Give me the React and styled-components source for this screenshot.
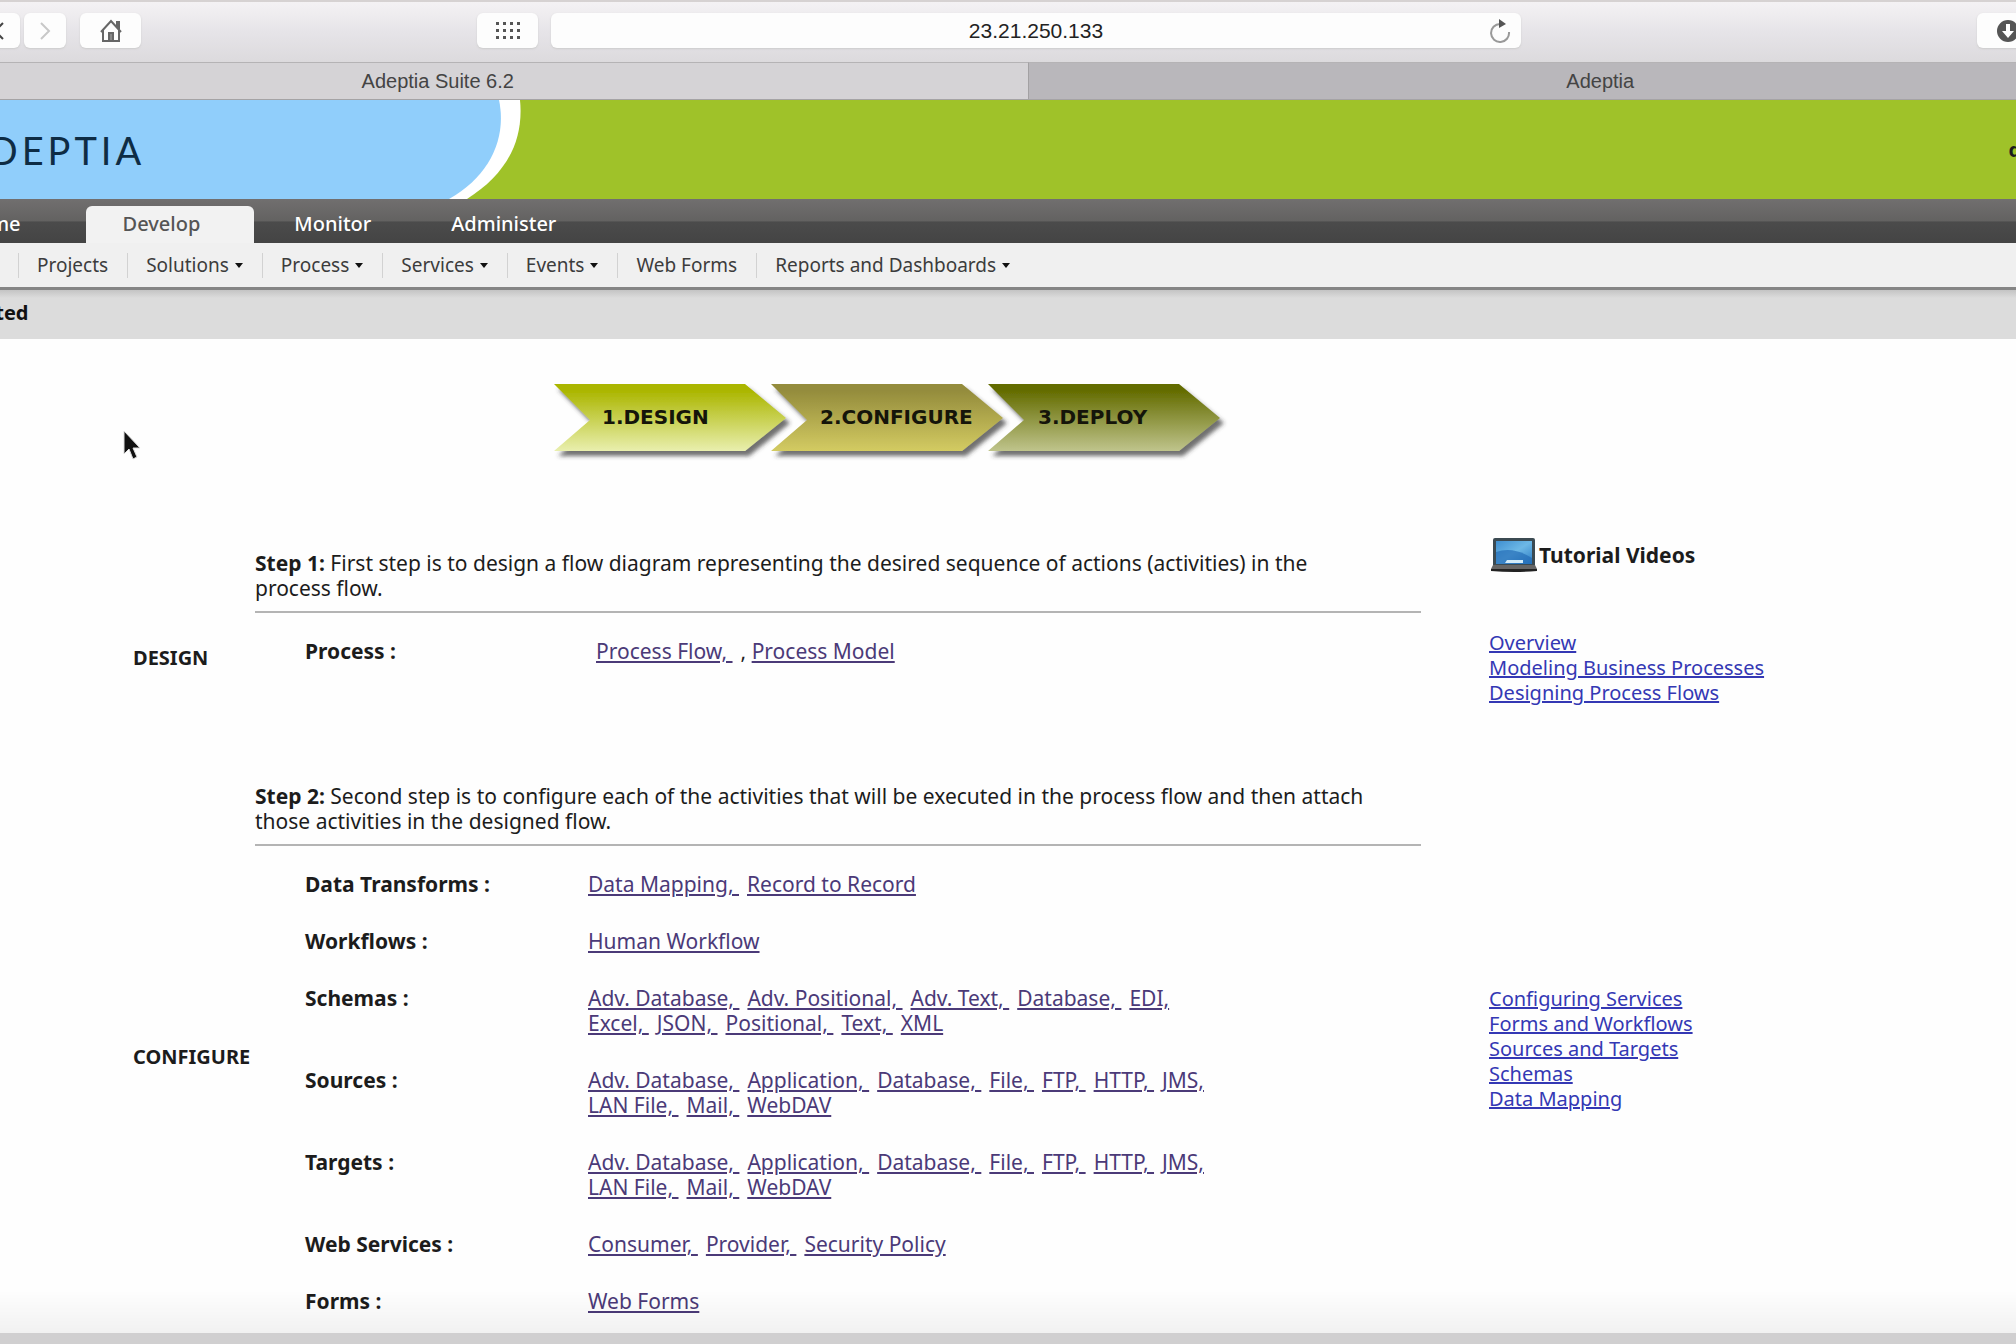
import React from "react";
import styled, { createGlobalStyle, css } from "styled-components";

const navItems = ["Home", "Develop", "Monitor", "Administer"];

const subNavItems = [
  { label: "Projects" },
  { label: "Solutions", menu: true },
  { label: "Process", menu: true },
  { label: "Services", menu: true },
  { label: "Events", menu: true },
  { label: "Web Forms" },
  { label: "Reports and Dashboards", menu: true },
];

const endpoints = [
  "Adv. Database",
  "Application",
  "Database",
  "File",
  "FTP",
  "HTTP",
  "JMS",
  "LAN File",
  "Mail",
  "WebDAV",
];

const configureRows = [
  { label: "Data Transforms", links: ["Data Mapping", "Record to Record"] },
  { label: "Workflows", links: ["Human Workflow"] },
  {
    label: "Schemas",
    links: [
      "Adv. Database",
      "Adv. Positional",
      "Adv. Text",
      "Database",
      "EDI",
      "Excel",
      "JSON",
      "Positional",
      "Text",
      "XML",
    ],
  },
  { label: "Sources", links: endpoints },
  { label: "Targets", links: endpoints },
  { label: "Web Services", links: ["Consumer", "Provider", "Security Policy"] },
  { label: "Forms", links: ["Web Forms"] },
];

const designVideos = [
  "Overview",
  "Modeling Business Processes",
  "Designing Process Flows",
];

const configureVideos = [
  "Configuring Services",
  "Forms and Workflows",
  "Sources and Targets",
  "Schemas",
  "Data Mapping",
];

const steps = [
  { label: "1.DESIGN", from: "#abb600", to: "#e9efae" },
  { label: "2.CONFIGURE", from: "#948c3c", to: "#d3cb62" },
  { label: "3.DEPLOY", from: "#646c00", to: "#bfc48c" },
];

const StepArrows = () => (
  <ArrowStrip viewBox="0 0 680 84" role="img" aria-label="Design, configure, deploy">
    <defs>
      <filter id="arrowShadow" x="-10%" y="-10%" width="120%" height="140%">
        <feDropShadow dx="4" dy="5" stdDeviation="2" floodColor="#333" floodOpacity="0.7" />
      </filter>
      {steps.map((step, idx) => (
        <linearGradient key={idx} id={`arrow${idx}`} x1="0" y1="0" x2="0" y2="1">
          <stop offset="0.1" stopColor={step.from} />
          <stop offset="1" stopColor={step.to} />
        </linearGradient>
      ))}
    </defs>
    {steps.map((step, idx) => (
      <g key={step.label} transform={`translate(${idx * 217} 0)`}>
        <path
          d="M2 5H193L234 39L193 72H2L38 41Z"
          fill={`url(#arrow${idx})`}
          filter="url(#arrowShadow)"
        />
        <ArrowLabel x={50 + idx} y="45">
          {step.label}
        </ArrowLabel>
      </g>
    ))}
  </ArrowStrip>
);

const LaptopIcon = () => (
  <svg width="46" height="36" viewBox="0 0 46 36" aria-hidden="true">
    <defs>
      <linearGradient id="screen" x1="0" y1="0" x2="1" y2="1">
        <stop offset="0" stopColor="#3f8fd0" />
        <stop offset="0.5" stopColor="#6db8e6" />
        <stop offset="1" stopColor="#2c7cc4" />
      </linearGradient>
    </defs>
    <path d="M4 1H42Q44 1 44 3V28H2V3Q2 1 4 1Z" fill="#3b4a52" />
    <path d="M5 4H41V27H5Z" fill="url(#screen)" />
    <path d="M5 15Q22 9 41 21V27H5Z" fill="#2069b4" opacity="0.65" />
    <path d="M16 23H32V26H14Z" fill="#d3ecfa" />
    <path d="M2 28H44L46 32V34H0V32Z" fill="#666" />
    <path d="M0 32H46V34Q23 36 0 34Z" fill="#222" />
  </svg>
);

const HomeIcon = () => (
  <svg width="22" height="24" viewBox="0 0 22 24" fill="none" stroke="#666" strokeWidth="2" aria-hidden="true">
    <path d="M1 13L11 2L21 13" />
    <path d="M17 8V3H19V10" />
    <path d="M3 11V22H19V11" />
    <path d="M9 22V14H13V22Z" fill="#888" />
  </svg>
);

const GridIcon = () => (
  <svg width="26" height="20" viewBox="0 0 26 20" fill="#555" aria-hidden="true">
    {[0, 1, 2].map((row) =>
      [0, 1, 2, 3].map((col) => (
        <rect key={`${row}${col}`} x={1 + col * 7} y={1 + row * 7} width="3" height="3" />
      ))
    )}
  </svg>
);

const ReloadIcon = () => (
  <svg width="22" height="24" viewBox="0 0 22 24" fill="none" aria-hidden="true">
    <path d="M11 5A9 9 0 1 0 20 13" stroke="#999" strokeWidth="2" />
    <path d="M10 0L17 5L10 9Z" fill="#555" />
  </svg>
);

const DownloadIcon = () => (
  <svg width="24" height="24" viewBox="0 0 24 24" aria-hidden="true">
    <circle cx="12" cy="12" r="11" fill="#555" />
    <path d="M10 5H14V12H18L12 19L6 12H10Z" fill="#fff" />
  </svg>
);

const Chevron = ({ back }) => (
  <svg width="12" height="20" viewBox="0 0 12 20" fill="none" strokeWidth="2" aria-hidden="true">
    {back ? (
      <path d="M10 2L2 10L10 18" stroke="#444" />
    ) : (
      <path d="M2 2L10 10L2 18" stroke="#c8c8c8" />
    )}
  </svg>
);

const LinkRow = ({ label, links }) => (
  <Row>
    <RowLabel>{label} :</RowLabel>
    <RowLinks>
      {links.map((link, idx) => (
        <VisitedLink href="#" key={link}>
          {idx < links.length - 1 ? `${link}, ` : link}
        </VisitedLink>
      ))}
    </RowLinks>
  </Row>
);

const VideoList = ({ items, top }) => (
  <Videos $top={top}>
    {items.map((item) => (
      <li key={item}>
        <a href="#">{item}</a>
      </li>
    ))}
  </Videos>
);

const App = () => {
  return (
    <Shell>
      <GlobalStyle />
      <Toolbar>
        <ToolButton $narrow aria-label="Back">
          <Chevron back />
        </ToolButton>
        <ToolButton $narrow aria-label="Forward">
          <Chevron />
        </ToolButton>
        <ToolButton $apart aria-label="Home">
          <HomeIcon />
        </ToolButton>
        <Spacer $grow={336} />
        <ToolButton aria-label="Top sites">
          <GridIcon />
        </ToolButton>
        <AddressBar>
          <Address aria-label="Address" defaultValue="23.21.250.133" />
          <ReloadButton aria-label="Reload">
            <ReloadIcon />
          </ReloadButton>
        </AddressBar>
        <Spacer $grow={456} />
        <ToolButton aria-label="Downloads">
          <DownloadIcon />
        </ToolButton>
      </Toolbar>
      <Tabs>
        <Tab $grow={1182} $active>
          Adeptia Suite 6.2
        </Tab>
        <Tab $grow={1142}>Adeptia</Tab>
      </Tabs>

      <Banner>
        <BannerArt viewBox="0 0 524 99" aria-hidden="true">
          <path d="M0 0H520C524 40 507 74 467 99H0Z" fill="#fff" />
          <path d="M0 0H499C507 38 490 76 449 99H0Z" fill="#90cefb" />
        </BannerArt>
        <Logo>ADEPTIA</Logo>
        <UserName>qa</UserName>
      </Banner>

      <MainNav>
        {navItems.map((item) => (
          <NavLink href="#" key={item} $active={item === "Develop"}>
            {item}
          </NavLink>
        ))}
      </MainNav>
      <SubNav>
        {subNavItems.map((item) => (
          <SubNavLink href="#" key={item.label}>
            {item.label}
            {item.menu && <Caret />}
          </SubNavLink>
        ))}
      </SubNav>
      <TitleStrip>
        <PageTitle>Getting Started</PageTitle>
      </TitleStrip>

      <Content>
        <StepArrows />
        <Section $top={88}>
          <Intro>
            <b>Step 1:</b> First step is to design a flow diagram representing the
            desired sequence of actions (activities) in the process flow.
          </Intro>
          <VideoHeading>
            <LaptopIcon />
            Tutorial Videos
          </VideoHeading>
          <SectionName $top={32}>DESIGN</SectionName>
          <Rows>
            <Row>
              <RowLabel>Process :</RowLabel>
              <RowLinks $indent>
                <VisitedLink href="#">{"Process Flow, "}</VisitedLink>,{" "}
                <VisitedLink href="#">Process Model</VisitedLink>
              </RowLinks>
            </Row>
          </Rows>
          <VideoList items={designVideos} top={17} />
        </Section>
        <Section $top={79}>
          <Intro>
            <b>Step 2:</b> Second step is to configure each of the activities that
            will be executed in the process flow and then attach those activities
            in the designed flow.
          </Intro>
          <SectionName $top={198}>CONFIGURE</SectionName>
          <Rows>
            {configureRows.map((row) => (
              <LinkRow key={row.label} {...row} />
            ))}
          </Rows>
          <VideoList items={configureVideos} top={140} />
        </Section>
      </Content>
      <BottomShade />
      <Pointer viewBox="0 0 20 32" aria-hidden="true">
        <path d="M2 1V24L7 19L11 29L15 27L11 18H18Z" fill="#111" stroke="#ddd" />
      </Pointer>
    </Shell>
  );
};

export default App;

const GlobalStyle = createGlobalStyle`
  * {
    box-sizing: border-box;
  }
  body {
    margin: 0;
    background: #fefefe;
    color: #1c1c1c;
    font-family: "Noto Sans", "Open Sans", sans-serif;
    font-size: 20px;
    line-height: 25px;
  }
  button, input {
    font: inherit;
    border: 0;
    padding: 0;
  }
`;

const Shell = styled.div`
  position: relative;
  min-height: 100vh;
  overflow: hidden;
`;

const Toolbar = styled.header`
  display: flex;
  align-items: center;
  height: 62px;
  margin: 0 -22px;
  padding-bottom: 3px;
  border-top: 2px solid #d6d2d2;
  background: linear-gradient(#f4f2f4, #e6e4e8 50%, #dcdadd);
`;

const ToolButton = styled.button`
  display: flex;
  flex: none;
  align-items: center;
  justify-content: center;
  width: ${({ $narrow }) => ($narrow ? 42 : 61)}px;
  height: 35px;
  margin-right: ${({ $narrow }) => ($narrow ? 4 : 0)}px;
  margin-left: ${({ $apart }) => ($apart ? 10 : 0)}px;
  border-radius: 6px;
  background: #fdfdfd;
  box-shadow: 0 1px 2px #ccc;
`;

const Spacer = styled.div`
  flex: ${({ $grow }) => $grow} 1 0;
`;

const AddressBar = styled.div`
  display: flex;
  flex: 970 1 0;
  align-items: center;
  height: 35px;
  margin-left: 13px;
  border-radius: 6px;
  background: #fdfdfd;
  box-shadow: 0 1px 2px #ccc;
`;

const Address = styled.input`
  flex: 1;
  min-width: 0;
  margin-left: 32px;
  background: transparent;
  color: #222;
  font-family: "Liberation Sans", Arial, sans-serif;
  font-size: 21px;
  text-align: center;
`;

const ReloadButton = styled.button`
  display: flex;
  margin-right: 10px;
  background: transparent;
`;

const Tabs = styled.div`
  display: flex;
  height: 38px;
  margin: 0 -155px 0 -153px;
  border-bottom: 1px solid #a5a3a5;
`;

const Tab = styled.button`
  flex: ${({ $grow }) => $grow} 1 0;
  border-top: 1px solid #b5b3b5;
  background: ${({ $active }) => ($active ? "#d5d3d6" : "#b9b7bb")};
  color: #444;
  font-family: "Liberation Sans", Arial, sans-serif;
  & + & {
    border-left: 1px solid #a3a1a3;
  }
`;

const Banner = styled.div`
  position: relative;
  display: flex;
  align-items: center;
  justify-content: space-between;
  height: 99px;
  background: #9fc229;
`;

const BannerArt = styled.svg`
  position: absolute;
  top: 0;
  left: 0;
  width: 524px;
  height: 100%;
`;

const Logo = styled.div`
  position: relative;
  margin-left: -41px;
  color: #0e2c44;
  font-family: Lato, sans-serif;
  font-size: 38px;
  line-height: 48px;
  letter-spacing: 4px;
`;

const UserName = styled.b`
  margin-right: -17px;
`;

const MainNav = styled.nav`
  display: flex;
  align-items: flex-end;
  height: 44px;
  margin-left: -77px;
  background: linear-gradient(#716f6f, #636261 50%, #4b4b4b 52%, #444);
`;

const NavLink = styled.a`
  height: 37px;
  padding: 0 40px;
  border-radius: 6px 6px 0 0;
  color: #fff;
  font-weight: 500;
  line-height: 36px;
  text-decoration: none;
  ${({ $active }) =>
    $active &&
    css`
      margin-left: 25px;
      padding: 0 54px 0 37px;
      background: #f2f2f2;
      color: #555;
    `}
`;

const SubNav = styled.nav`
  display: flex;
  align-items: center;
  height: 47px;
  padding-left: 18px;
  border-bottom: 3px solid #858585;
  background: #f0f0f0;
  font-size: 19px;
`;

const SubNavLink = styled.a`
  display: flex;
  align-items: center;
  gap: 6px;
  padding: 0 19px 0 18px;
  border-left: 1px solid #d2d2d2;
  color: #3c3c3c;
  text-decoration: none;
`;

const Caret = styled.span`
  border: 4px solid transparent;
  border-top: 5px solid #111;
  border-bottom: 0;
`;

const TitleStrip = styled.div`
  height: 49px;
  padding: 10px 0;
  background: linear-gradient(#c4c4c4, #dcdcdc 8px);
`;

const PageTitle = styled.h1`
  margin: 0 0 0 -126px;
  color: #111;
  font-size: 20px;
  line-height: 25px;
`;

const Content = styled.main`
  padding: 40px 0 30px 133px;
`;

const ArrowStrip = styled.svg`
  display: block;
  width: 680px;
  height: 84px;
  margin-left: 419px;
`;

const ArrowLabel = styled.text`
  fill: #15150a;
  font-family: "DejaVu Sans", sans-serif;
  font-size: 20px;
  font-weight: 700;
`;

const Section = styled.section`
  display: grid;
  grid-template-columns: 122px minmax(0, 1166fr) minmax(0, 595fr);
  margin-top: ${({ $top }) => $top}px;
`;

const Intro = styled.p`
  grid-column: 2;
  margin: 0;
  padding: 0 44px 10px 0;
  border-bottom: 2px solid #b4b4b4;
  font-size: 21px;
`;

const VideoHeading = styled.h2`
  display: flex;
  align-items: center;
  align-self: start;
  gap: 2px;
  margin: -14px 0 0 70px;
  font-size: 21px;
  line-height: 25px;
`;

const SectionName = styled.h3`
  grid-column: 1;
  margin: 0;
  padding-top: ${({ $top }) => $top}px;
  font-size: 20px;
  line-height: 25px;
`;

const Rows = styled.div`
  display: flex;
  flex-direction: column;
  gap: 32px;
  padding: 26px 0 0 50px;
  font-size: 21px;
`;

const Row = styled.div`
  display: grid;
  grid-template-columns: 283px minmax(0, 632px);
`;

const RowLabel = styled.b``;

const RowLinks = styled.div`
  padding-left: ${({ $indent }) => ($indent ? 8 : 0)}px;
`;

const VisitedLink = styled.a`
  margin-right: 8px;
  color: #4b3a78;
`;

const Videos = styled.ul`
  margin: 0;
  padding: ${({ $top }) => $top}px 0 0 68px;
  list-style: none;
  a {
    color: #3438b4;
  }
`;

const BottomShade = styled.div`
  position: fixed;
  right: 0;
  bottom: 0;
  left: 0;
  height: 54px;
  border-bottom: 11px solid #d0cfd0;
  background: linear-gradient(transparent, rgba(0, 0, 0, 0.05));
  pointer-events: none;
`;

const Pointer = styled.svg`
  position: absolute;
  top: 430px;
  left: 122px;
  width: 20px;
  height: 32px;
  pointer-events: none;
`;
